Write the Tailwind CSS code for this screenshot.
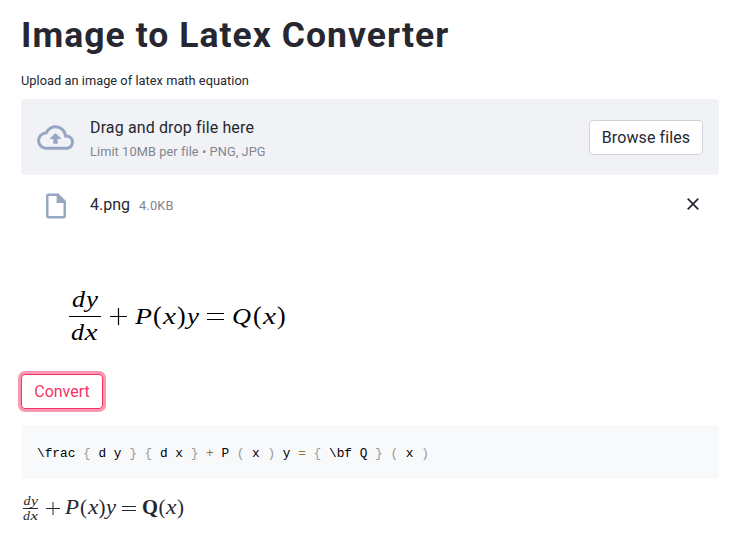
<!DOCTYPE html>
<html lang="en">
<head>
<meta charset="utf-8">
<title>Image to Latex Converter</title>
<script src="https://cdn.jsdelivr.net/npm/@tailwindcss/browser@4"></script>
</head>
<body class="bg-white text-[#262730] font-['Roboto',sans-serif]">
<main class="w-[719px] pl-[21px] pt-[14px] h-[538px] overflow-hidden">
  <h1 class="h-[43px] leading-[43px] text-[35.5px] font-bold whitespace-nowrap tracking-[1.04px]">Image to Latex Converter</h1>
  <p class="mt-[13px] h-[21px] leading-[21px] text-[12.8px] whitespace-nowrap tracking-[0.03px]">Upload an image of latex math equation</p>
  <section class="mt-2 h-[76px] rounded bg-[#f0f2f6] flex items-center px-4">
    <svg class="w-[37px] h-[37px] mr-4 shrink-0" viewBox="0 0 24 24" fill="#97a6c3"><path d="M19.35 10.04A7.49 7.49 0 0 0 12 4C9.11 4 6.6 5.64 5.35 8.04A5.994 5.994 0 0 0 0 14c0 3.31 2.69 6 6 6h13c2.76 0 5-2.24 5-5 0-2.64-2.05-4.78-4.65-4.96zM19 18H6c-2.21 0-4-1.79-4-4 0-2.05 1.53-3.76 3.56-3.97l1.07-.11.5-.95A5.469 5.469 0 0 1 12 6c2.62 0 4.88 1.86 5.39 4.43l.3 1.5 1.53.11A2.98 2.98 0 0 1 22 15c0 1.65-1.35 3-3 3zM8 13h2.55v3h2.9v-3H16l-4-4z"/></svg>
    <div class="grow whitespace-nowrap pt-1">
      <div class="h-[26px] leading-[26px] text-base tracking-[0.13px]">Drag and drop file here</div>
      <div class="h-[22px] leading-[22px] text-[12.8px] tracking-[0.07px] text-[#83858d]">Limit 10MB per file • PNG, JPG</div>
    </div>
    <button class="w-[114px] h-[35px] pt-[2px] rounded border border-[#d0d2d7] bg-white text-base tracking-[0.1px] whitespace-nowrap">Browse files</button>
  </section>
  <div class="h-[60px] flex items-center px-4 whitespace-nowrap">
    <svg class="w-[30px] h-[30px] ml-1 mr-[19px] mt-px" viewBox="0 0 24 24" fill="#97a6c3"><path d="M14 2H6c-1.1 0-1.99.9-1.99 2L4 20c0 1.100.89 2 1.990 2H18c1.100 0 2-.9 2-2V8l-6-6zM6 20V4h6.500v5.500H18V20H6z"/></svg>
    <span class="text-base">4.png</span>
    <span class="ml-[9px] text-[12.8px] tracking-[0.2px] text-[#83858d] mt-[2px]">4.0KB</span>
    <svg class="ml-auto mr-1 mb-[2px] w-[12px] h-[12px]" viewBox="0 0 12 12" fill="none" stroke="#262730" stroke-width="1.7"><path d="M.7.7l10.6 10.6M11.3.7L.7 11.3"/></svg>
  </div>
  <svg class="block w-[698px] h-[139px] font-['Liberation_Serif',serif]" viewBox="21 235 698 139" fill="#000">
    <g font-size="24" font-style="italic">
      <text x="72" y="307" textLength="13" lengthAdjust="spacingAndGlyphs">d</text>
      <text x="86" y="307" textLength="12" lengthAdjust="spacingAndGlyphs">y</text>
      <text x="71" y="340" textLength="13" lengthAdjust="spacingAndGlyphs">d</text>
      <text x="84.500" y="340" textLength="13" lengthAdjust="spacingAndGlyphs">x</text>
      <text x="135" y="324" textLength="17" lengthAdjust="spacingAndGlyphs">P</text>
      <text x="163" y="324" textLength="13" lengthAdjust="spacingAndGlyphs">x</text>
      <text x="187" y="324" textLength="12" lengthAdjust="spacingAndGlyphs">y</text>
      <text x="232" y="324" textLength="19" lengthAdjust="spacingAndGlyphs">Q</text>
      <text x="263" y="324" textLength="13" lengthAdjust="spacingAndGlyphs">x</text>
    </g>
    <g font-size="26">
      <text x="153" y="324">(</text><text x="177" y="324">)</text>
      <text x="253" y="324">(</text><text x="277" y="324">)</text>
    </g>
    <path d="M69 316.500H101M110 316.500H127M118.500 308V325M207 313.500H224M207 319.500H224" stroke="#000" stroke-width="1.2"/>
  </svg>
  <button class="block w-[82px] h-[35px] rounded border border-[#f63366] text-[#f63366] bg-white text-base shadow-[0_0_0_3px_#fb99b3]">Convert</button>
  <pre class="mt-4 h-[54px] rounded bg-[#f8f9fb] px-4 leading-[57px] text-[12.8px] text-black font-['Liberation_Mono',monospace]"><code>\frac <span class="text-[#999]">{</span> d y <span class="text-[#999]">}</span> <span class="text-[#999]">{</span> d x <span class="text-[#999]">}</span> <span class="text-[#9a6e3a]">+</span> P <span class="text-[#999]">(</span> x <span class="text-[#999]">)</span> y <span class="text-[#9a6e3a]">=</span> <span class="text-[#999]">{</span> \bf Q <span class="text-[#999]">}</span> <span class="text-[#999]">(</span> x <span class="text-[#999]">)</span></code></pre>
  <svg class="block w-[698px] h-[59px] font-['Liberation_Serif',serif]" viewBox="21 479 698 59" fill="#262730">
    <g font-style="italic">
      <g font-size="13.500">
        <text x="23.500" y="505" textLength="7" lengthAdjust="spacingAndGlyphs">d</text>
        <text x="31" y="505" textLength="7" lengthAdjust="spacingAndGlyphs">y</text>
        <text x="23" y="520" textLength="7" lengthAdjust="spacingAndGlyphs">d</text>
        <text x="30.500" y="520" textLength="7.500" lengthAdjust="spacingAndGlyphs">x</text>
      </g>
      <g font-size="20">
        <text x="65" y="514" textLength="14" lengthAdjust="spacingAndGlyphs">P</text>
        <text x="88" y="514" textLength="10.500" lengthAdjust="spacingAndGlyphs">x</text>
        <text x="106" y="514" textLength="10" lengthAdjust="spacingAndGlyphs">y</text>
        <text x="166" y="514" textLength="10.500" lengthAdjust="spacingAndGlyphs">x</text>
      </g>
    </g>
    <g font-size="21">
      <text x="80" y="514">(</text><text x="98.500" y="514">)</text>
      <text x="158.500" y="514">(</text><text x="177" y="514">)</text>
    </g>
    <text x="142" y="514" font-size="20" font-weight="bold" textLength="16" lengthAdjust="spacingAndGlyphs">Q</text>
    <path d="M23 508.500H38M46 508.500H60M53 502V515M122 506.500H136M122 510.500H136" stroke="#262730" stroke-width="1"/>
  </svg>
</main>
</body>
</html>
